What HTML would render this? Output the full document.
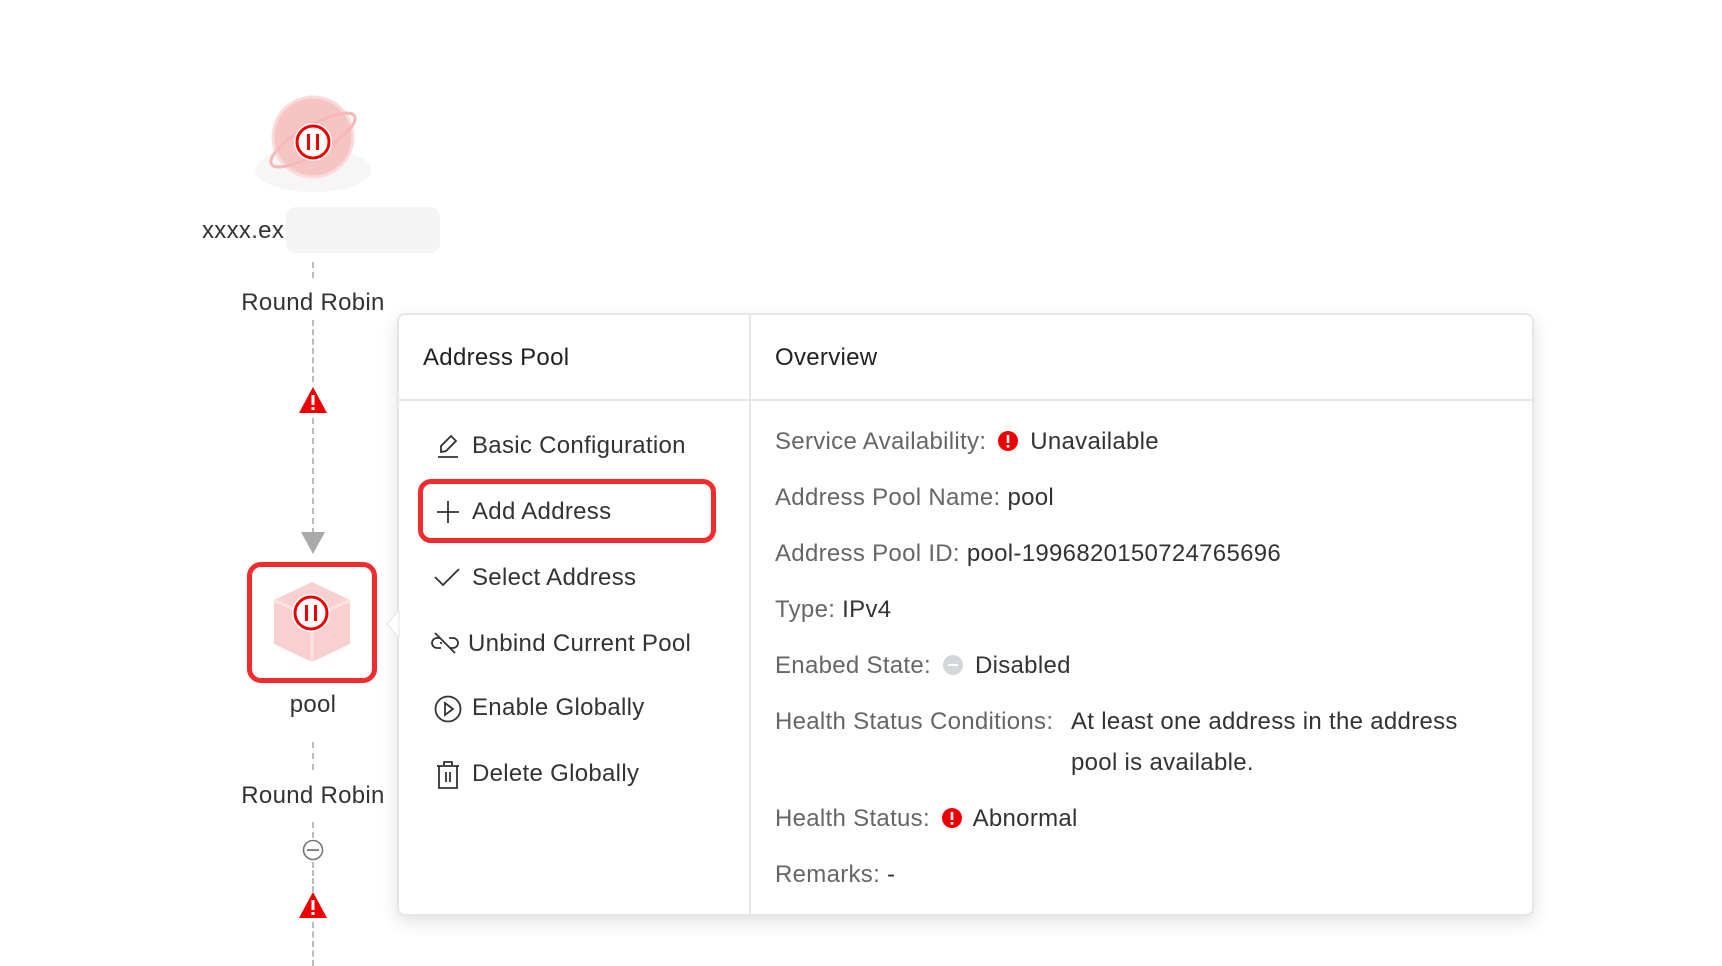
<!DOCTYPE html>
<html><head><meta charset="utf-8"><style>
*{margin:0;padding:0;box-sizing:border-box}
body{width:1722px;height:966px;background:#fff;position:relative;overflow:hidden;font-family:"Liberation Sans",sans-serif;color:#333;font-size:24px;letter-spacing:0.3px}
.a{position:absolute}
.t{position:absolute;white-space:nowrap;line-height:1}
.c{position:absolute;white-space:nowrap;line-height:1;left:163px;width:300px;text-align:center}
.dash{position:absolute;left:312px;width:0;border-left:2px dashed #bbb}
.panel{position:absolute;left:397px;top:313px;width:1137px;height:603px;background:#fff;border:2px solid #e6e6e6;border-radius:8px;box-shadow:0 6px 18px rgba(0,0,0,.12)}
.lbl{color:#666}
</style></head><body>
<svg class="a" style="left:243px;top:85px" width="140" height="120" viewBox="0 0 140 120">
<ellipse cx="70" cy="85" rx="58" ry="22" fill="#f6f6f6"/>
<circle cx="70" cy="52" r="40" fill="#f7c4c4"/>
<circle cx="70" cy="52" r="40" fill="none" stroke="#fbdada" stroke-width="3"/>
<ellipse cx="70" cy="55" rx="48" ry="14" fill="none" stroke="#f6b8b8" stroke-width="3" transform="rotate(-30 70 55)"/>
<circle cx="70" cy="57" r="19" fill="#fff"/>
<circle cx="70" cy="57" r="16" fill="none" stroke="#e00" stroke-width="3"/>
<rect x="64" y="49" width="3" height="16" fill="#e00"/><rect x="73" y="49" width="3" height="16" fill="#e00"/>
</svg>
<div class="t" style="left:202px;top:219px">xxxx.ex</div>
<div class="a" style="left:286px;top:207px;width:154px;height:46px;background:#f4f4f4;border-radius:10px"></div>
<div class="dash" style="top:262px;height:16px"></div>
<div class="c" style="top:291px">Round Robin</div>
<div class="dash" style="top:320px;height:62px"></div>
<svg class="a" style="left:298px;top:386px" width="30" height="28"><path d="M15 1 L29 27 L1 27 Z" fill="#e00"/><rect x="13.5" y="9" width="3" height="10" fill="#fff"/><rect x="13.5" y="21" width="3" height="3" fill="#fff"/></svg>
<div class="dash" style="top:418px;height:116px"></div>
<svg class="a" style="left:301px;top:532px" width="24" height="24"><path d="M0 0 L24 0 L12 22 Z" fill="#aaa"/></svg>
<div class="a" style="left:247px;top:562px;width:130px;height:121px;border:5px solid #f22c2c;border-radius:14px;background:#fff"></div>
<svg class="a" style="left:262px;top:574px" width="100" height="100" viewBox="0 0 100 100">
<path d="M50 8 L88 26 L88 70 L50 88 L12 70 L12 26 Z" fill="#f8d0d0"/>
<path d="M12 26 L50 44 L88 26" fill="none" stroke="#fbe3e3" stroke-width="3"/>
<path d="M50 44 L50 88" stroke="#fbe3e3" stroke-width="3"/>
<circle cx="49" cy="39" r="19" fill="#fff"/>
<circle cx="49" cy="39" r="16" fill="none" stroke="#e00" stroke-width="3"/>
<rect x="43" y="31" width="3" height="16" fill="#e00"/><rect x="52" y="31" width="3" height="16" fill="#e00"/>
</svg>
<div class="c" style="top:693px">pool</div>
<div class="dash" style="top:742px;height:28px"></div>
<div class="c" style="top:784px">Round Robin</div>
<div class="dash" style="top:822px;height:16px"></div>
<svg class="a" style="left:302px;top:839px" width="22" height="22"><circle cx="11" cy="11" r="9.5" fill="none" stroke="#777" stroke-width="1.6"/><rect x="5" y="10.2" width="12" height="1.8" fill="#777"/></svg>
<div class="dash" style="top:862px;height:30px"></div>
<svg class="a" style="left:298px;top:891px" width="30" height="28"><path d="M15 1 L29 27 L1 27 Z" fill="#e00"/><rect x="13.5" y="9" width="3" height="10" fill="#fff"/><rect x="13.5" y="21" width="3" height="3" fill="#fff"/></svg>
<div class="dash" style="top:922px;height:44px"></div>

<div class="panel">
 <div class="a" style="left:350px;top:0;width:2px;height:599px;background:#e6e6e6"></div>
 <div class="a" style="left:0;top:84px;width:1133px;height:2px;background:#e6e6e6"></div>
</div>
<svg class="a" style="left:385px;top:610px" width="16" height="28"><path d="M14 0 L2 14 L14 28 Z" fill="#fff" stroke="#e6e6e6" stroke-width="1"/></svg>
<div class="t" style="left:423px;top:346px;color:#222">Address Pool</div>
<div class="t" style="left:775px;top:346px;color:#222">Overview</div>

<div class="a" style="left:418px;top:479px;width:298px;height:64px;border:5px solid #f22c2c;border-radius:13px"></div>
<svg class="a" style="left:436px;top:433px" width="24" height="26" viewBox="0 0 24 26" fill="none" stroke="#333" stroke-width="1.8"><path d="M5 19 L5 13 L15 3 L20 8 L10 18 Z"/><path d="M2 24 L22 24"/></svg>
<div class="t" style="left:472px;top:434px">Basic Configuration</div>
<svg class="a" style="left:436px;top:500px" width="24" height="24" stroke="#333" stroke-width="1.8"><path d="M12 1 V23 M1 12 H23"/></svg>
<div class="t" style="left:472px;top:500px">Add Address</div>
<svg class="a" style="left:434px;top:566px" width="26" height="22" fill="none" stroke="#333" stroke-width="1.8"><path d="M1 11 L9 19 L25 3"/></svg>
<div class="t" style="left:472px;top:566px">Select Address</div>
<svg class="a" style="left:431px;top:631px" width="28" height="24" viewBox="0 0 28 24" fill="none" stroke="#333" stroke-width="1.8"><path d="M9 7 H6 A5 5 0 0 0 6 17 H10 M18 7 H22 A5 5 0 0 1 22 17 H19 M9 12 H11 M4 2 L24 22"/></svg>
<div class="t" style="left:468px;top:632px">Unbind Current Pool</div>
<svg class="a" style="left:434px;top:695px" width="28" height="28" fill="none" stroke="#333" stroke-width="1.8"><circle cx="14" cy="14" r="12.5"/><path d="M11 8 L19 14 L11 20 Z"/></svg>
<div class="t" style="left:472px;top:696px">Enable Globally</div>
<svg class="a" style="left:436px;top:760px" width="24" height="30" fill="none" stroke="#333" stroke-width="1.8"><path d="M1 6 H23 M8 6 V2 H16 V6 M3 6 V28 H21 V6 M10 12 V22 M14 12 V22"/></svg>
<div class="t" style="left:472px;top:762px">Delete Globally</div>

<div class="t" style="left:775px;top:430px"><span class="lbl">Service Availability:</span> <svg width="22" height="22" style="vertical-align:-3px;margin:0 4px"><circle cx="11" cy="11" r="10" fill="#e00"/><rect x="9.7" y="5" width="2.6" height="8" fill="#fff"/><rect x="9.7" y="15" width="2.6" height="2.6" fill="#fff"/></svg> Unavailable</div>
<div class="t" style="left:775px;top:486px"><span class="lbl">Address Pool Name:</span> pool</div>
<div class="t" style="left:775px;top:542px"><span class="lbl">Address Pool ID:</span> pool-1996820150724765696</div>
<div class="t" style="left:775px;top:598px"><span class="lbl">Type:</span> IPv4</div>
<div class="t" style="left:775px;top:654px"><span class="lbl">Enabed State:</span> <svg width="22" height="22" style="vertical-align:-3px;margin:0 4px"><circle cx="11" cy="11" r="10" fill="#d3d6db"/><rect x="6" y="10" width="10" height="2" fill="#fff"/></svg> Disabled</div>
<div class="t" style="left:775px;top:710px"><span class="lbl">Health Status Conditions:</span></div>
<div class="t" style="left:1071px;top:710px">At least one address in the address</div>
<div class="t" style="left:1071px;top:751px">pool is available.</div>
<div class="t" style="left:775px;top:807px"><span class="lbl">Health Status:</span> <svg width="22" height="22" style="vertical-align:-3px;margin:0 4px"><circle cx="11" cy="11" r="10" fill="#e00"/><rect x="9.7" y="5" width="2.6" height="8" fill="#fff"/><rect x="9.7" y="15" width="2.6" height="2.6" fill="#fff"/></svg> Abnormal</div>
<div class="t" style="left:775px;top:863px"><span class="lbl">Remarks:</span> -</div>
</body></html>
